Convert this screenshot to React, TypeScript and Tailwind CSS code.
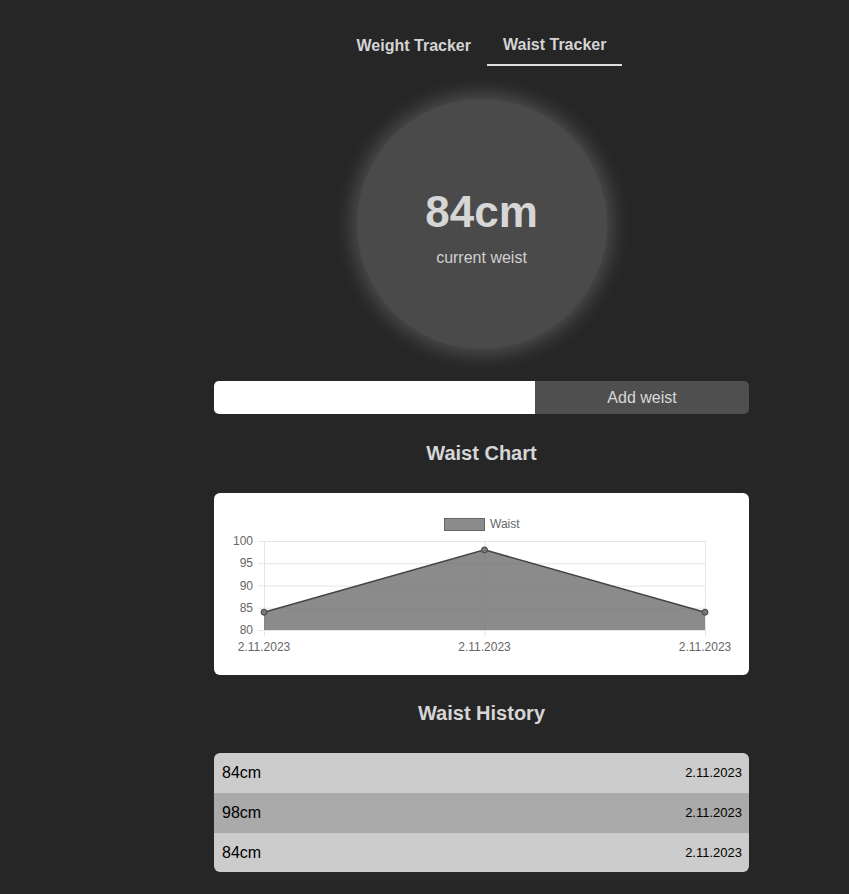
import React, { useState } from 'react';

const entries = [
  { value: 84, date: '2.11.2023' },
  { value: 98, date: '2.11.2023' },
  { value: 84, date: '2.11.2023' },
];

const WaistChart = () => {
  const left = 50;
  const right = 491;
  const top = 48;
  const bottom = 137;
  const yFor = (v: number) => bottom - ((v - 80) / 20) * (bottom - top);
  const xFor = (i: number) => left + (i * (right - left)) / (entries.length - 1);
  const pts = entries.map((e, i) => [xFor(i), yFor(e.value)]);
  const line = pts.map((p) => p.join(',')).join(' ');
  const area = `${left},${bottom} ${line} ${right},${bottom}`;

  return (
    <svg width="535" height="182" className="block" style={{ fontFamily: '"Liberation Sans", Arial, sans-serif' }}>
      {/* legend */}
      <rect x="230.5" y="25.5" width="40" height="12" fill="#8c8c8c" stroke="#666" strokeWidth="1" />
      <text x="276" y="35" fontSize="12" fill="#666">Waist</text>

      {/* grid */}
      {[100, 95, 90, 85, 80].map((v) => (
        <g key={v}>
          <line x1={left - 6} x2={right} y1={yFor(v) + 0.5} y2={yFor(v) + 0.5} stroke="#e5e5e5" />
          <text x={left - 11} y={yFor(v) + 4} fontSize="12" fill="#666" textAnchor="end">{v}</text>
        </g>
      ))}
      {entries.map((e, i) => (
        <g key={i}>
          <line x1={xFor(i) + 0.5} x2={xFor(i) + 0.5} y1={top} y2={bottom + 6} stroke="#e5e5e5" />
          <text x={xFor(i)} y={158} fontSize="12" fill="#666" textAnchor="middle">{e.date}</text>
        </g>
      ))}

      <polygon points={area} fill="rgba(110,110,110,0.8)" />
      <polyline points={line} fill="none" stroke="#444" strokeWidth="1.5" />
      {pts.map(([x, y], i) => (
        <circle key={i} cx={x} cy={y} r="3" fill="#777" stroke="#444" strokeWidth="1" />
      ))}
    </svg>
  );
};

const App = () => {
  const [tab] = useState('waist');

  return (
    <div
      className="min-h-[894px] bg-[#262626] text-[#d4d4d4]"
      style={{ fontFamily: '"Liberation Sans", Arial, sans-serif' }}
    >
      <div className="ml-[214px] w-[535px] pt-6 pb-6 flex flex-col items-center">
        {/* tabs */}
        <div className="flex">
          <button className={`px-4 pt-[12px] pb-[8px] text-base leading-5 font-bold border-b-2 ${tab === 'weight' ? 'border-[#ddd]' : 'border-transparent'}`}>
            Weight Tracker
          </button>
          <button className={`px-4 pt-[11px] pb-[9px] text-base leading-5 font-bold border-b-2 ${tab === 'waist' ? 'border-[#ddd]' : 'border-transparent'}`}>
            Waist Tracker
          </button>
        </div>

        {/* current value */}
        <div className="mt-[33px] w-[250px] h-[250px] pt-3 rounded-full bg-[#4a4a4a] shadow-[0_0_20px_5px_rgba(255,255,255,0.2)] flex flex-col items-center justify-center">
          <div className="text-[44px] leading-[50px] font-bold text-[#d6d6d6] mt-[-4px]">84cm</div>
          <div className="mt-[9px] text-base text-[#d0d0d0]">current weist</div>
        </div>

        {/* input */}
        <div className="mt-[32px] w-full h-[33px] flex rounded-[5px] overflow-hidden">
          <input className="w-[321px] bg-white outline-none px-2 text-black" />
          <button className="flex-1 bg-[#4f4f4f] text-base text-[#d8d8d8]">Add weist</button>
        </div>

        <h2 className="mt-[27px] text-xl leading-6 font-bold text-[#d6d6d6]">Waist Chart</h2>

        <div className="mt-[28px] w-full bg-white rounded-md overflow-hidden">
          <WaistChart />
        </div>

        <h2 className="mt-[26px] text-xl leading-6 font-bold text-[#d6d6d6]">Waist History</h2>

        <div className="mt-[28px] w-full rounded-md overflow-hidden text-black">
          {entries.map((e, i) => (
            <div
              key={i}
              className={`h-10 ${i === 2 ? 'h-[39px]' : ''} flex items-center justify-between pl-2 pr-[7px] ${i % 2 === 1 ? 'bg-[#aaaaaa]' : 'bg-[#cccccc]'}`}
            >
              <span className="text-base">{e.value}cm</span>
              <span className="text-[13px]">{e.date}</span>
            </div>
          ))}
        </div>
      </div>
    </div>
  );
};

export default App;
